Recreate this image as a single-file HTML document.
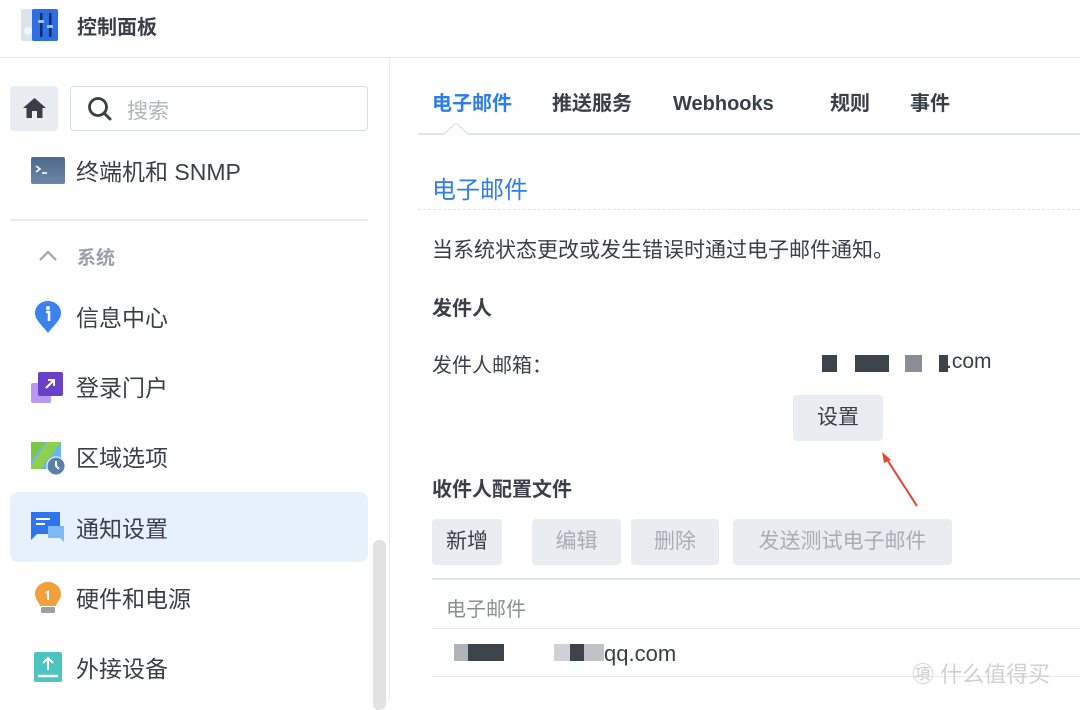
<!DOCTYPE html>
<html><head><meta charset="utf-8"><style>
*{margin:0;padding:0;box-sizing:border-box}
body{width:1080px;height:698px;overflow:hidden;background:#fff;font-family:"Liberation Sans","Noto Sans CJK SC",sans-serif;color:#3a3f47;position:relative}
.a{position:absolute;white-space:nowrap}
.item{position:absolute;left:76px;font-size:23px;color:#3a3f47;line-height:30px}
.btn{position:absolute;top:519px;height:46px;background:#e9edf1;border-radius:4px;font-size:21px;line-height:46px;text-align:center;color:#a8adb4}
.tab{position:absolute;top:90px;font-size:20px;font-weight:bold;line-height:28px}
</style></head><body>
<!-- header -->
<div class="a" style="left:0;top:57px;width:1080px;height:1px;background:#e3e7ec"></div>
<svg class="a" style="left:20px;top:7px" width="40" height="36" viewBox="0 0 40 36">
<rect x="1" y="2" width="14" height="32" rx="2" fill="#dfe3e8"/><circle cx="8" cy="24" r="4" fill="#f4f5f7"/>
<rect x="12" y="2" width="26" height="32" rx="2" fill="#2d6fe0"/>
<rect x="20" y="6" width="2.5" height="24" fill="#0f2f6a"/><rect x="29" y="6" width="2.5" height="24" fill="#0f2f6a"/>
<rect x="18" y="13" width="6" height="3" fill="#9cc1ff"/><rect x="27" y="18" width="6" height="3" fill="#9cc1ff"/></svg>
<div class="a" style="left:77px;top:11px;font-size:20px;font-weight:bold;color:#3a3f47">控制面板</div>
<!-- sidebar -->
<div class="a" style="left:389px;top:58px;width:1px;height:640px;background:#e6e9ed"></div>
<div class="a" style="left:10px;top:86px;width:48px;height:45px;background:#e9edf1;border-radius:4px"></div>
<svg class="a" style="left:22px;top:97px" width="25" height="22" viewBox="0 0 25 22"><path d="M12.5 1 L24 11 H20.5 V21 H15 V14 H10 V21 H4.5 V11 H1 Z" fill="#3a3f47"/></svg>
<div class="a" style="left:70px;top:86px;width:298px;height:45px;border:1.5px solid #d4dce5;border-radius:4px"></div>
<svg class="a" style="left:87px;top:96px" width="26" height="26" viewBox="0 0 26 26"><circle cx="11" cy="11" r="8.5" fill="none" stroke="#3a3f47" stroke-width="2.8"/><path d="M17 17 L23 23" stroke="#3a3f47" stroke-width="3" stroke-linecap="round"/></svg>
<div class="a" style="left:127px;top:95px;font-size:21px;color:#b0b5bb">搜索</div>
<svg class="a" style="left:31px;top:157px" width="34" height="27" viewBox="0 0 34 27"><defs><linearGradient id="t" x1="0" y1="0" x2="0" y2="1"><stop offset="0" stop-color="#4c6a8c"/><stop offset="1" stop-color="#6d88a6"/></linearGradient></defs><rect width="34" height="27" rx="2" fill="url(#t)"/><path d="M5 9 L9 12 L5 15" stroke="#fff" stroke-width="1.6" fill="none"/><path d="M11 16 H16" stroke="#fff" stroke-width="1.6"/></svg>
<div class="item" style="top:157px">终端机和 SNMP</div>
<div class="a" style="left:10px;top:219px;width:358px;height:2px;background:#e8ebef"></div>
<svg class="a" style="left:38px;top:248px" width="20" height="14" viewBox="0 0 20 14"><path d="M2 12 L10 4 L18 12" stroke="#a8adb4" stroke-width="2.4" fill="none"/></svg>
<div class="a" style="left:77px;top:243px;font-size:19px;color:#9aa0a7;font-weight:bold">系统</div>
<svg class="a" style="left:34px;top:300px" width="28" height="34" viewBox="0 0 28 34"><path d="M14 1 C21 1 27 6 27 13 C27 20 20 25 14 33 C8 25 1 20 1 13 C1 6 7 1 14 1Z" fill="#3b82f0"/><circle cx="14" cy="8" r="2" fill="#fff"/><path d="M12 12 H15 V21" stroke="#fff" stroke-width="2.5" fill="none"/></svg>
<div class="item" style="top:303px">信息中心</div>
<svg class="a" style="left:31px;top:371px" width="33" height="33" viewBox="0 0 33 33"><rect x="0" y="12" width="20" height="20" rx="2" fill="#b79af0"/><rect x="7" y="1" width="25" height="24" rx="2" fill="#6a40c8"/><path d="M15 17 L23 9 M17 9 H23 V15" stroke="#fff" stroke-width="2" fill="none"/></svg>
<div class="item" style="top:373px">登录门户</div>
<svg class="a" style="left:31px;top:441px" width="34" height="35" viewBox="0 0 34 35"><path d="M0 1 H30 V28 H0Z" fill="#6ab4f0"/><path d="M0 1 H14 L0 20Z" fill="#7cc742"/><path d="M16 1 H30 L10 28 H0 V24Z" fill="#8cd04e"/><path d="M30 1 V28 H10Z" fill="#6ab4f0"/><circle cx="25" cy="25" r="9" fill="#5a7fa8" stroke="#fff" stroke-width="1"/><path d="M25 20 V25 L28 28" stroke="#fff" stroke-width="2" fill="none"/></svg>
<div class="item" style="top:443px">区域选项</div>
<div class="a" style="left:10px;top:492px;width:358px;height:70px;background:#e7f1fc;border-radius:8px"></div>
<svg class="a" style="left:31px;top:512px" width="34" height="30" viewBox="0 0 34 30"><path d="M0 0 H29 V22 H6 L0 28Z" fill="#2f74ec"/><path d="M5 7 H19 M5 12 H14" stroke="#fff" stroke-width="2"/><path d="M17 14 H33 V30 L29 26 H17Z" fill="#7fb8f6"/></svg>
<div class="item" style="top:514px">通知设置</div>
<svg class="a" style="left:34px;top:581px" width="28" height="34" viewBox="0 0 28 34"><path d="M14 1 C21 1 27 6 27 13 C27 18 23 21 22 25 H6 C5 21 1 18 1 13 C1 6 7 1 14 1Z" fill="#f0a13c"/><rect x="7" y="26" width="14" height="6" rx="1" fill="#9aa0a7"/><path d="M12 12 L14 11 V19" stroke="#fff" stroke-width="2" fill="none"/></svg>
<div class="item" style="top:584px">硬件和电源</div>
<svg class="a" style="left:34px;top:652px" width="28" height="30" viewBox="0 0 28 30"><rect width="28" height="30" rx="2" fill="#4cc4bf"/><path d="M14 18 V6 M9 11 L14 6 L19 11" stroke="#fff" stroke-width="2" fill="none"/><path d="M4 24 H24" stroke="#fff" stroke-width="2.5"/></svg>
<div class="item" style="top:654px">外接设备</div>
<div class="a" style="left:373px;top:540px;width:13px;height:170px;background:#e2e2e2;border-radius:6px"></div>
<!-- tabs -->
<div class="tab" style="left:432px;color:#2f7ee8">电子邮件</div>
<div class="tab" style="left:552px">推送服务</div>
<div class="tab" style="left:673px">Webhooks</div>
<div class="tab" style="left:830px">规则</div>
<div class="tab" style="left:910px">事件</div>
<div class="a" style="left:418px;top:133px;width:662px;height:2px;background:#dde4ec"></div>
<svg class="a" style="left:444px;top:123px" width="24" height="13" viewBox="0 0 24 13"><path d="M0 11 L12 0 L24 11" fill="#fff" stroke="#dde4ec" stroke-width="1.5"/><rect x="0" y="11" width="24" height="2" fill="#fff"/></svg>
<div class="a" style="left:432px;top:170px;font-size:24px;color:#2f7ee8">电子邮件</div>
<div class="a" style="left:418px;top:209px;width:662px;border-top:1.5px dashed #dde4ec"></div>
<div class="a" style="left:432px;top:234px;font-size:21px">当系统状态更改或发生错误时通过电子邮件通知。</div>
<div class="a" style="left:432px;top:292px;font-size:20px;font-weight:bold">发件人</div>
<div class="a" style="left:432px;top:349px;font-size:20px">发件人邮箱：</div>
<div class="a" style="left:822px;top:355px;width:15px;height:17px;background:#3d434b"></div>
<div class="a" style="left:855px;top:355px;width:34px;height:17px;background:#3d434b"></div>
<div class="a" style="left:905px;top:355px;width:17px;height:17px;background:#8a8e94"></div>
<div class="a" style="left:939px;top:355px;width:9px;height:17px;background:#3d434b"></div>
<div class="a" style="left:946px;top:350px;font-size:21px">.com</div>
<div class="a" style="left:793px;top:395px;width:90px;height:46px;background:#e9edf1;border-radius:4px;font-size:21px;line-height:46px;text-align:center;color:#3a3f47">设置</div>
<svg class="a" style="left:876px;top:446px" width="46" height="64" viewBox="0 0 46 64"><path d="M41 60 L10 12" stroke="#e8442f" stroke-width="2"/><path d="M6 6 L15 14 L8 17Z" fill="#e8442f"/></svg>
<div class="a" style="left:432px;top:473px;font-size:20px;font-weight:bold">收件人配置文件</div>
<div class="btn" style="left:432px;width:70px;color:#3a3f47">新增</div>
<div class="btn" style="left:532px;width:89px">编辑</div>
<div class="btn" style="left:631px;width:88px">删除</div>
<div class="btn" style="left:733px;width:219px">发送测试电子邮件</div>
<div class="a" style="left:432px;top:578px;width:648px;height:2px;background:#dde4ec"></div>
<div class="a" style="left:446px;top:593px;font-size:20px;color:#8a8f96">电子邮件</div>
<div class="a" style="left:432px;top:628px;width:648px;height:1px;background:#e6e9ed"></div>
<div class="a" style="left:454px;top:644px;width:14px;height:17px;background:#b0b3b8"></div>
<div class="a" style="left:468px;top:644px;width:36px;height:17px;background:#3d434b"></div>
<div class="a" style="left:554px;top:644px;width:16px;height:17px;background:#cfd1d4"></div>
<div class="a" style="left:570px;top:644px;width:14px;height:17px;background:#3d434b"></div>
<div class="a" style="left:584px;top:644px;width:20px;height:17px;background:#c0c2c6"></div>
<div class="a" style="left:604px;top:641px;font-size:22px">qq.com</div>
<div class="a" style="left:432px;top:676px;width:648px;height:1px;background:#e6e9ed"></div>
<div class="a" style="left:912px;top:657px;font-size:22px;color:#d0d0d0">㊠ 什么值得买</div>
</body></html>
